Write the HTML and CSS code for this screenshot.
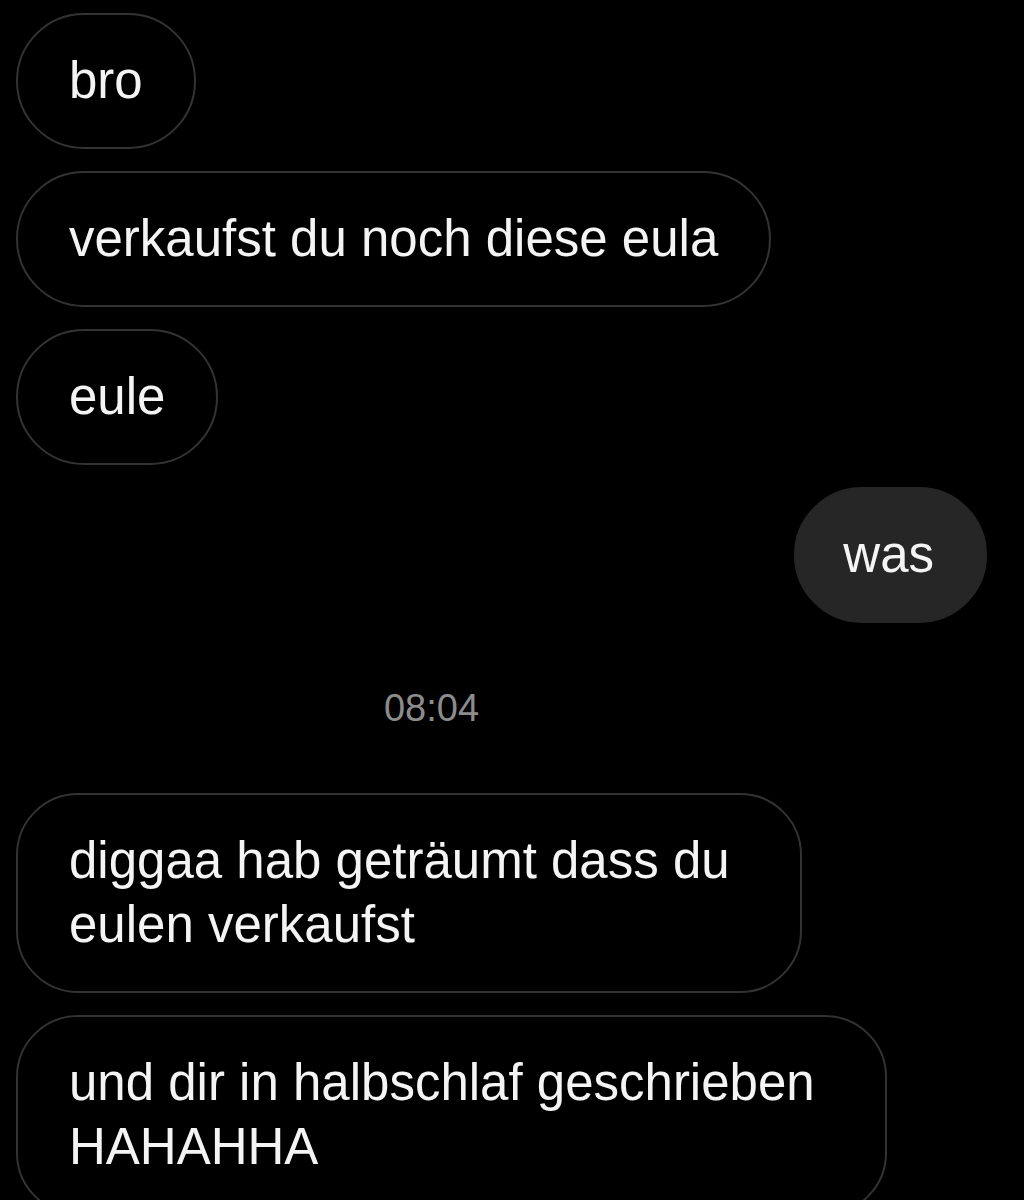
FILE: index.html
```html
<!DOCTYPE html>
<html lang="de">
<head>
<meta charset="utf-8">
<title>Chat</title>
<link rel="stylesheet" href="styles.css">
</head>
<body>
<main class="chat">
  <div class="row"><div class="bubble in">bro</div></div>
  <div class="row"><div class="bubble in">verkaufst du noch diese eula</div></div>
  <div class="row"><div class="bubble in">eule</div></div>
  <div class="row out-row"><div class="bubble out">was</div></div>
  <div class="time-row"><span class="time">08:04</span></div>
  <div class="row"><div class="bubble in multi">diggaa hab geträumt dass du<br>eulen verkaufst</div></div>
  <div class="row"><div class="bubble in multi">und dir in halbschlaf geschrieben<br>HAHAHHA</div></div>
</main>
</body>
</html>
```

FILE: styles.css
```css
html, body {
  margin: 0;
  padding: 0;
  background: #000;
}

body {
  font-family: "Liberation Sans", Arial, sans-serif;
  color: #f4f4f4;
  overflow: hidden;
  height: 1200px;
}

.chat {
  display: flex;
  flex-direction: column;
  gap: 22px;
  padding: 13px 37px 0 16px;
}

.row {
  display: flex;
  justify-content: flex-start;
}

.out-row {
  justify-content: flex-end;
}

.bubble {
  box-sizing: border-box;
  font-size: 51px;
  line-height: 64px;
  padding: 34px 51px;
  border-radius: 68px;
  border: 2px solid #333;
  white-space: nowrap;
}

.bubble.in {
  background: #000;
}

.bubble.out {
  background: #262626;
  border-color: #262626;
  padding-left: 47px;
}

.bubble.multi {
  padding-right: 70px;
  border-radius: 62px;
}

.time-row {
  height: 126px;
  display: flex;
  align-items: center;
  justify-content: center;
  padding-right: 140px;
}

.time {
  font-size: 38px;
  color: #8c8c8c;
}
```
